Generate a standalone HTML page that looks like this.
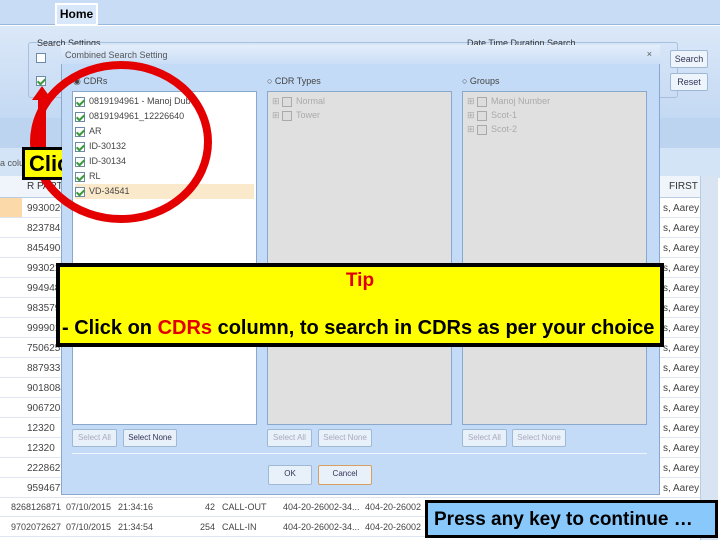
<!DOCTYPE html>
<html><head><style>
*{margin:0;padding:0;box-sizing:border-box}
body{width:720px;height:540px;overflow:hidden;position:relative;background:#fff;font-family:"Liberation Sans",sans-serif;font-size:9px;color:#333}
.a{position:absolute}
.row{position:absolute;left:0;width:700px;height:20px;border-bottom:1px solid #dde6f0;font-size:10px;color:#444;white-space:nowrap}
.row span{position:absolute;top:5px;white-space:nowrap;overflow:hidden}
.row span.r{left:663px;width:37px}
.row.b{font-size:9px}
.cb{display:inline-block;width:10px;height:10px;border:1px solid #6a8aa8;background:#fff;vertical-align:middle;margin-right:4px;position:relative}
.cb.k::after{content:"";position:absolute;left:2px;top:0;width:3px;height:6px;border:solid #3a9a3a;border-width:0 2px 2px 0;transform:rotate(45deg)}
.cb.g{border-color:#aaa;background:#ddd}
.btn{position:absolute;height:18px;border:1px solid #9fb8d4;background:#e8f0fa;border-radius:2px;font-size:8px;color:#aab;text-align:center;line-height:16px}
</style></head><body>
<div class="a" style="left:0;top:0;width:720px;height:25px;background:#c8dcf6;border-bottom:1px solid #9ab8dc"></div>
<div class="a" style="left:55px;top:3px;width:43px;height:23px;background:#fff;padding:2px"><div style="background:#d8e8fa;height:19px;font-weight:bold;font-size:12px;color:#000;line-height:19px;text-align:center">Home</div></div>
<div class="a" style="left:0;top:26px;width:720px;height:92px;background:linear-gradient(#dbe8f8,#c4d9f3)"></div>
<div class="a" style="left:28px;top:42px;width:650px;height:56px;border:1px solid #a8c0de;border-radius:3px"></div>
<div class="a" style="left:37px;top:38px;font-size:9px;color:#333">Search Settings</div>
<div class="a" style="left:467px;top:38px;font-size:9px;color:#333">Date Time Duration Search</div>
<div class="a" style="left:36px;top:52px"><span class="cb"></span></div>
<div class="a" style="left:36px;top:75px"><span class="cb k"></span></div>
<div class="btn" style="left:670px;top:50px;width:38px;color:#335;font-size:9px;background:#eef4fc">Search</div>
<div class="btn" style="left:670px;top:73px;width:38px;color:#335;font-size:9px;background:#eef4fc">Reset</div>
<div class="a" style="left:0;top:118px;width:720px;height:30px;background:#bcd4f0"></div>
<div class="a" style="left:0;top:148px;width:720px;height:30px;background:#d4e4f7"></div>
<div class="a" style="left:0;top:158px;font-size:9px;color:#555">a colu</div>
<div class="a" style="left:0;top:176px;width:700px;height:22px;background:#f0f5fb;border-bottom:1px solid #b8cce4"></div>
<div class="a" style="left:27px;top:181px;font-size:10px;color:#333">R PART</div>
<div class="a" style="left:669px;top:181px;font-size:10px;color:#333">FIRST C</div>
<div class="a" style="left:700px;top:176px;width:18px;height:364px;background:#d8e4f2;border-left:1px solid #b8cce4"></div>
<div class="a" style="left:0;top:198px;width:22px;height:20px;background:#fbd9a8"></div>
<div class="row" style="top:198px"><span style="left:27px">9930020979</span><span class="r">s, Aarey C</span></div>
<div class="row" style="top:218px"><span style="left:27px">8237846953</span><span class="r">s, Aarey C</span></div>
<div class="row" style="top:238px"><span style="left:27px">8454906853</span><span class="r">s, Aarey C</span></div>
<div class="row" style="top:258px"><span style="left:27px">9930215131</span><span class="r">s, Aarey C</span></div>
<div class="row" style="top:278px"><span style="left:27px">9949488000</span><span class="r">s, Aarey C</span></div>
<div class="row" style="top:298px"><span style="left:27px">9835791127</span><span class="r">s, Aarey C</span></div>
<div class="row" style="top:318px"><span style="left:27px">9999012629</span><span class="r">s, Aarey C</span></div>
<div class="row" style="top:338px"><span style="left:27px">7506255991</span><span class="r">s, Aarey C</span></div>
<div class="row" style="top:358px"><span style="left:27px">8879337713</span><span class="r">s, Aarey C</span></div>
<div class="row" style="top:378px"><span style="left:27px">9018084950</span><span class="r">s, Aarey C</span></div>
<div class="row" style="top:398px"><span style="left:27px">9067203003</span><span class="r">s, Aarey C</span></div>
<div class="row" style="top:418px"><span style="left:27px">12320</span><span class="r">s, Aarey C</span></div>
<div class="row" style="top:438px"><span style="left:27px">12320</span><span class="r">s, Aarey C</span></div>
<div class="row" style="top:458px"><span style="left:27px">2228627875</span><span class="r">s, Aarey C</span></div>
<div class="row" style="top:478px"><span style="left:27px">9594677345</span><span class="r">s, Aarey C</span></div>
<div class="row b" style="top:497px"><span style="left:11px">8268126871</span><span style="left:66px">07/10/2015</span><span style="left:118px">21:34:16</span><span style="left:205px">42</span><span style="left:222px">CALL-OUT</span><span style="left:283px;width:78px">404-20-26002-34...</span><span style="left:365px;width:58px">404-20-26002</span></div>
<div class="row b" style="top:517px"><span style="left:11px">9702072627</span><span style="left:66px">07/10/2015</span><span style="left:118px">21:34:54</span><span style="left:200px">254</span><span style="left:222px">CALL-IN</span><span style="left:283px;width:78px">404-20-26002-34...</span><span style="left:365px;width:58px">404-20-26002</span></div>
<!-- dialog -->
<div class="a" style="left:61px;top:45px;width:599px;height:450px;background:#c4dbf7;border:1px solid #8aa8cc"></div>
<div class="a" style="left:61px;top:45px;width:599px;height:19px;background:linear-gradient(#e4eefb,#cadef6);font-size:9px;color:#555;padding:5px 0 0 4px">Combined Search Setting<span style="position:absolute;right:8px;top:4px">×</span></div>
<div class="a" style="left:73px;top:76px;font-size:9px;color:#444">◉ CDRs</div>
<div class="a" style="left:267px;top:76px;font-size:9px;color:#444">○ CDR Types</div>
<div class="a" style="left:462px;top:76px;font-size:9px;color:#444">○ Groups</div>
<div class="a" style="left:72px;top:91px;width:185px;height:334px;background:#fff;border:1px solid #8aa8cc;padding:2px 2px;font-size:9px;line-height:15px;color:#444">
<div><span class="cb k"></span>0819194961 - Manoj Dube</div>
<div><span class="cb k"></span>0819194961_12226640</div>
<div><span class="cb k"></span>AR</div>
<div><span class="cb k"></span>ID-30132</div>
<div><span class="cb k"></span>ID-30134</div>
<div><span class="cb k"></span>RL</div>
<div style="background:#fbe9cc"><span class="cb k"></span>VD-34541</div>
</div>
<div class="a" style="left:267px;top:91px;width:185px;height:334px;background:#e0e0e0;border:1px solid #8aa8cc;padding:2px 4px;font-size:9px;line-height:14px;color:#aaa">
<div>⊞ <span class="cb g"></span>Normal</div><div>⊞ <span class="cb g"></span>Tower</div></div>
<div class="a" style="left:462px;top:91px;width:185px;height:334px;background:#e0e0e0;border:1px solid #8aa8cc;padding:2px 4px;font-size:9px;line-height:14px;color:#aaa">
<div>⊞ <span class="cb g"></span>Manoj Number</div><div>⊞ <span class="cb g"></span>Scot-1</div><div>⊞ <span class="cb g"></span>Scot-2</div></div>
<div class="btn" style="left:72px;top:429px;width:45px">Select All</div>
<div class="btn" style="left:123px;top:429px;width:54px;color:#335">Select None</div>
<div class="btn" style="left:267px;top:429px;width:45px">Select All</div>
<div class="btn" style="left:318px;top:429px;width:54px">Select None</div>
<div class="btn" style="left:462px;top:429px;width:45px">Select All</div>
<div class="btn" style="left:512px;top:429px;width:54px">Select None</div>
<div class="a" style="left:72px;top:453px;width:575px;height:1px;background:#eef5fd"></div>
<div class="btn" style="left:268px;top:465px;width:44px;height:20px;color:#335">OK</div>
<div class="btn" style="left:318px;top:465px;width:54px;height:20px;color:#335;border-color:#d8a060">Cancel</div>
<!-- red circle & arrow -->
<svg class="a" style="left:0;top:0" width="720" height="540"><ellipse cx="121" cy="142" rx="87" ry="77" fill="none" stroke="#e40000" stroke-width="8"/><rect x="38" y="98" width="8" height="52" fill="#e40000"/><polygon points="32,100 52,100 42,86" fill="#e40000"/></svg>
<div class="a" style="left:22px;top:147px;width:40px;height:33px;background:#ffff00;border:3px solid #000;border-right:none;font-weight:bold;font-size:22px;color:#000;padding:1px 0 0 4px;overflow:hidden;white-space:nowrap">Click</div>
<!-- tip -->
<div class="a" style="left:56px;top:263px;width:608px;height:84px;background:#ffff00;border:4px solid #000"></div>
<div class="a" style="left:56px;top:270px;width:608px;text-align:center;font-weight:bold;font-size:19px;color:#e00000">Tip</div>
<div class="a" style="left:62px;top:317px;font-weight:bold;font-size:20px;color:#000;white-space:nowrap">- Click on <span style="color:#e00000">CDRs</span> column, to search in CDRs as per your choice</div>
<div class="a" style="left:425px;top:500px;width:293px;height:38px;background:#88c8fa;border:3px solid #000;font-weight:bold;font-size:19px;color:#000;padding:6px 0 0 6px;white-space:nowrap">Press any key to continue …</div>
</body></html>
